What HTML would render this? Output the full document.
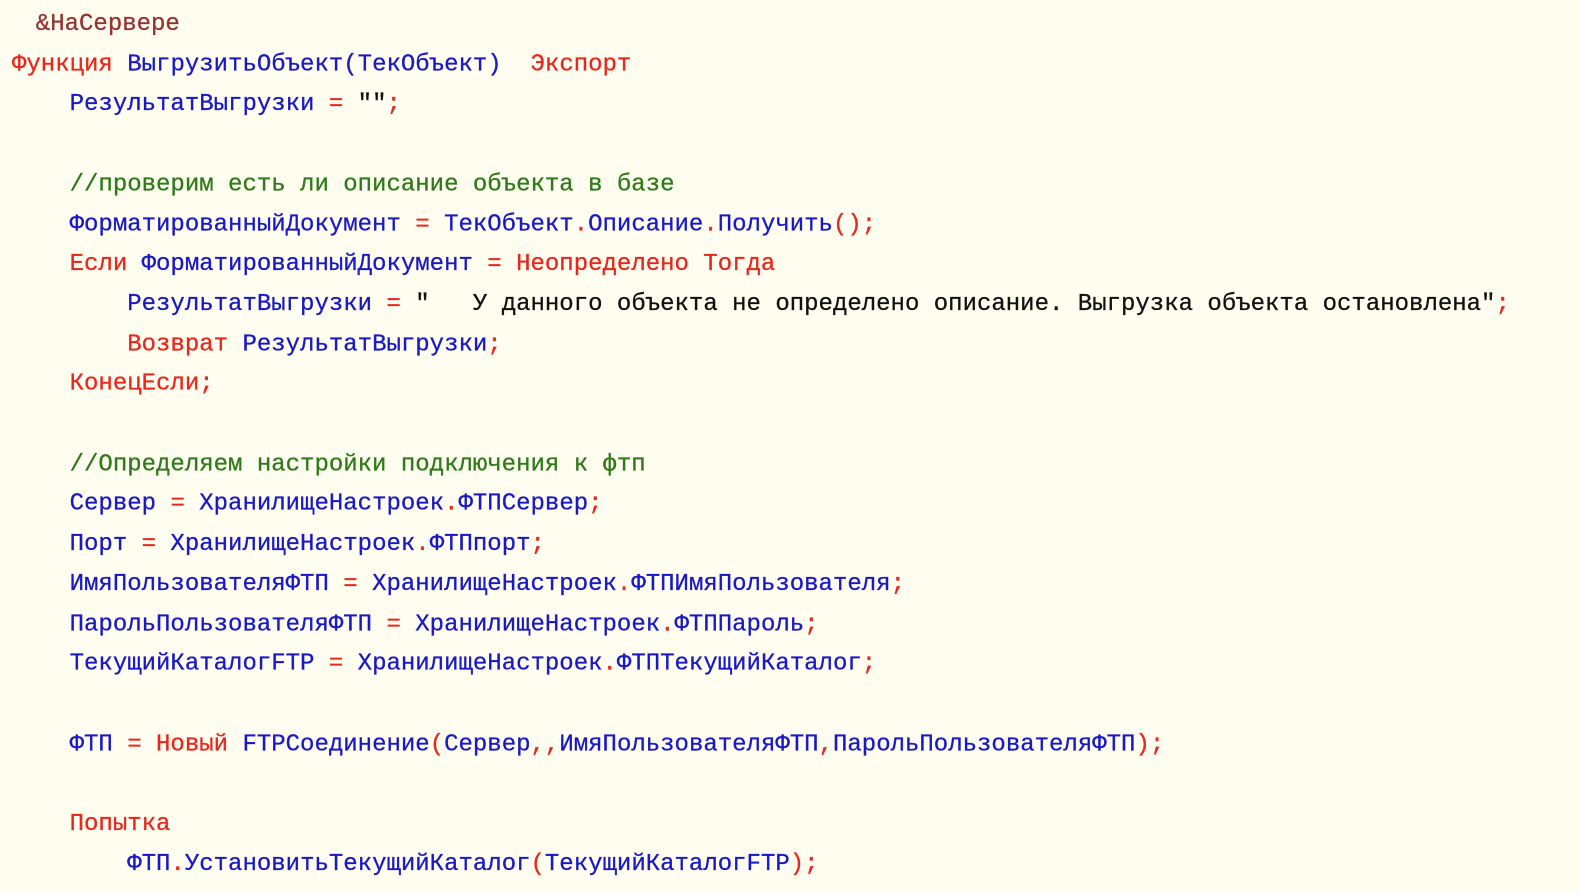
<!DOCTYPE html>
<html><head><meta charset="utf-8"><style>
html,body{margin:0;padding:0;background:#fefdef;width:1580px;height:892px;overflow:hidden}
pre{margin:0;padding:5px 0 0 12px;font-family:"Liberation Mono",monospace;font-size:24px;line-height:39.7px;color:#1919c8;-webkit-text-stroke:0.3px;transform:scaleY(1.0071);transform-origin:0 0}
.r{color:#e8281e}.b{color:#1919c8}.m{color:#963232}.g{color:#2f7a1a}.k{color:#111}
</style></head><body><pre><span class="m" style="position:relative;left:-5px">  &amp;НаСервере</span>
<span class="r">Функция</span> ВыгрузитьОбъект<span class="b">(</span>ТекОбъект<span class="b">)</span>  <span class="r">Экспорт</span>
    РезультатВыгрузки <span class="r">=</span> <span class="k">""</span><span class="r">;</span>

    <span class="g">//проверим есть ли описание объекта в базе</span>
    ФорматированныйДокумент <span class="r">=</span> ТекОбъект<span class="r">.</span>Описание<span class="r">.</span>Получить<span class="r">();</span>
    <span class="r">Если</span> ФорматированныйДокумент <span class="r">=</span> <span class="r">Неопределено Тогда</span>
        РезультатВыгрузки <span class="r">=</span> <span class="k">"   У данного объекта не определено описание. Выгрузка объекта остановлена"</span><span class="r">;</span>
        <span class="r">Возврат</span> РезультатВыгрузки<span class="r">;</span>
    <span class="r">КонецЕсли;</span>

    <span class="g">//Определяем настройки подключения к фтп</span>
    Сервер <span class="r">=</span> ХранилищеНастроек<span class="r">.</span>ФТПСервер<span class="r">;</span>
    Порт <span class="r">=</span> ХранилищеНастроек<span class="r">.</span>ФТПпорт<span class="r">;</span>
    ИмяПользователяФТП <span class="r">=</span> ХранилищеНастроек<span class="r">.</span>ФТПИмяПользователя<span class="r">;</span>
    ПарольПользователяФТП <span class="r">=</span> ХранилищеНастроек<span class="r">.</span>ФТППароль<span class="r">;</span>
    ТекущийКаталогFTP <span class="r">=</span> ХранилищеНастроек<span class="r">.</span>ФТПТекущийКаталог<span class="r">;</span>

    ФТП <span class="r">=</span> <span class="r">Новый</span> FTPСоединение<span class="r">(</span>Сервер<span class="r">,,</span>ИмяПользователяФТП<span class="r">,</span>ПарольПользователяФТП<span class="r">);</span>

    <span class="r">Попытка</span>
        ФТП<span class="r">.</span>УстановитьТекущийКаталог<span class="r">(</span>ТекущийКаталогFTP<span class="r">);</span>
</pre></body></html>
